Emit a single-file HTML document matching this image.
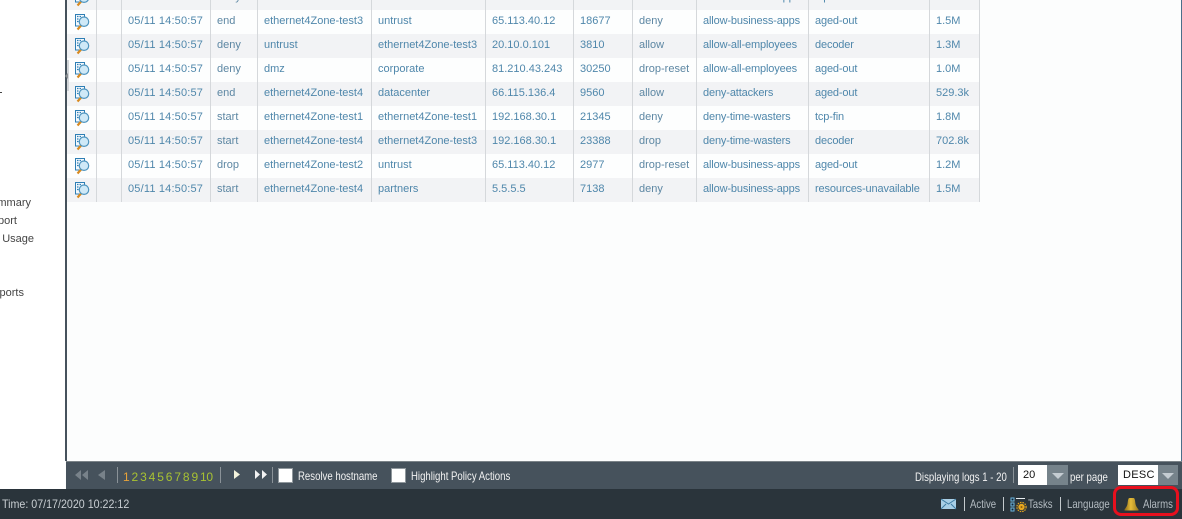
<!DOCTYPE html>
<html><head><meta charset="utf-8">
<style>
html,body{margin:0;padding:0}
body{width:1182px;height:519px;overflow:hidden;position:relative;background:#fcfdfd;font-family:"Liberation Sans",sans-serif;font-size:11px}
.a{position:absolute;white-space:nowrap}
#side{left:0;top:0;width:65px;height:489px;background:#fff;overflow:hidden;color:#444}
#main{left:65px;top:0;height:461px;background:#fcfdfd;border-left:2px solid #46525c;box-sizing:content-box;overflow:hidden;width:1115px}
#rb{left:1181px;top:0;width:1px;height:461px;background:#4a6f8a}
table{position:absolute;left:0;top:-14px;border-collapse:separate;border-spacing:0;table-layout:fixed;width:913px}
td{height:24px;padding:0 0 2px 6px;box-sizing:border-box;border-right:1px solid #d5d8db;color:#4f87ab;white-space:nowrap;overflow:hidden;font-size:11px;line-height:22px}
tr:nth-child(odd) td{background:#f2f3f5}
tr:nth-child(even) td{background:#fdfefe}
td.g{color:#5d87a3}
td:first-child{padding:0}
td:nth-child(3){letter-spacing:.18px}
td:nth-child(10),td:nth-child(11){letter-spacing:-.14px}
svg.i{display:block;margin:0 0 0 6px}
#bar{top:461px;height:28px;background:#46525c;border-top:1px solid #7b8388;box-sizing:border-box;left:66px;width:1116px}
#st{left:0;top:489px;width:1182px;height:30px;background:#2a343b}
.w{color:#f2f2f2;font-size:12px;line-height:14px;transform:scaleX(.8);transform-origin:0 0}
.sep{position:absolute;width:1px;background:#8a9298}
.cb{position:absolute;width:13px;height:13px;background:#fff;border:1px solid #8f979c;top:468px}
.s{color:#b4bcc2;font-size:12px;line-height:14px;transform:scaleX(.8);transform-origin:0 0}
</style></head><body>
<svg width="0" height="0" style="position:absolute"><defs>
<g id="ic">
<rect x="2.500" y="1.500" width="9" height="11.500" fill="#f4f9fd" stroke="#2f7fb5"/>
<path d="M4 3.500h1.500M6.500 3.500h1.500M4 6h1.500M4 8.500h1.500M6.500 8.500h1.500" stroke="#2f7fb5" stroke-width="1.300" fill="none"/>
<path d="M4.500 16.500L9 11.500" stroke="#d98a1f" stroke-width="2.200" fill="none"/>
<circle cx="11" cy="8.700" r="4.700" fill="#cfe9f7" stroke="#4f95bf" stroke-width="1.200"/>
</g></defs></svg>

<div class="a" id="side">
<span class="a" style="right:34px;top:197px;line-height:13px">Summary</span>
<span class="a" style="right:48px;top:215px;line-height:13px">Report</span>
<span class="a" style="right:31px;top:233px;line-height:13px">Bin Usage</span>
<span class="a" style="right:41px;top:287px;line-height:13px">Reports</span>
<div class="a" style="left:0;top:92px;width:2px;height:1px;background:#444"></div>
</div>

<div class="a" id="main">
<table>
<colgroup><col style="width:30px"><col style="width:25px"><col style="width:89px"><col style="width:47px"><col style="width:114px"><col style="width:114px"><col style="width:88px"><col style="width:59px"><col style="width:64px"><col style="width:112px"><col style="width:121px"><col style="width:50px"></colgroup>
<tr><td><svg class="i" width="18" height="18"><use href="#ic"/></svg></td><td></td><td>05/11 14:50:57</td><td class="g">deny</td><td>ethernet4Zone-test1</td><td>untrust</td><td>192.168.30.1</td><td>21345</td><td class="g">allow</td><td>allow-business-apps</td><td>tcp-fin</td><td>1.1M</td></tr>
<tr><td><svg class="i" width="18" height="18"><use href="#ic"/></svg></td><td></td><td>05/11 14:50:57</td><td class="g">end</td><td>ethernet4Zone-test3</td><td>untrust</td><td>65.113.40.12</td><td>18677</td><td class="g">deny</td><td>allow-business-apps</td><td>aged-out</td><td>1.5M</td></tr>
<tr><td><svg class="i" width="18" height="18"><use href="#ic"/></svg></td><td></td><td>05/11 14:50:57</td><td class="g">deny</td><td>untrust</td><td>ethernet4Zone-test3</td><td>20.10.0.101</td><td>3810</td><td class="g">allow</td><td>allow-all-employees</td><td>decoder</td><td>1.3M</td></tr>
<tr><td><svg class="i" width="18" height="18"><use href="#ic"/></svg></td><td></td><td>05/11 14:50:57</td><td class="g">deny</td><td>dmz</td><td>corporate</td><td>81.210.43.243</td><td>30250</td><td class="g">drop-reset</td><td>allow-all-employees</td><td>aged-out</td><td>1.0M</td></tr>
<tr><td><svg class="i" width="18" height="18"><use href="#ic"/></svg></td><td></td><td>05/11 14:50:57</td><td class="g">end</td><td>ethernet4Zone-test4</td><td>datacenter</td><td>66.115.136.4</td><td>9560</td><td class="g">allow</td><td>deny-attackers</td><td>aged-out</td><td>529.3k</td></tr>
<tr><td><svg class="i" width="18" height="18"><use href="#ic"/></svg></td><td></td><td>05/11 14:50:57</td><td class="g">start</td><td>ethernet4Zone-test1</td><td>ethernet4Zone-test1</td><td>192.168.30.1</td><td>21345</td><td class="g">deny</td><td>deny-time-wasters</td><td>tcp-fin</td><td>1.8M</td></tr>
<tr><td><svg class="i" width="18" height="18"><use href="#ic"/></svg></td><td></td><td>05/11 14:50:57</td><td class="g">start</td><td>ethernet4Zone-test4</td><td>ethernet4Zone-test3</td><td>192.168.30.1</td><td>23388</td><td class="g">drop</td><td>deny-time-wasters</td><td>decoder</td><td>702.8k</td></tr>
<tr><td><svg class="i" width="18" height="18"><use href="#ic"/></svg></td><td></td><td>05/11 14:50:57</td><td class="g">drop</td><td>ethernet4Zone-test2</td><td>untrust</td><td>65.113.40.12</td><td>2977</td><td class="g">drop-reset</td><td>allow-business-apps</td><td>aged-out</td><td>1.2M</td></tr>
<tr><td><svg class="i" width="18" height="18"><use href="#ic"/></svg></td><td></td><td>05/11 14:50:57</td><td class="g">start</td><td>ethernet4Zone-test4</td><td>partners</td><td>5.5.5.5</td><td>7138</td><td class="g">deny</td><td>allow-business-apps</td><td>resources-unavailable</td><td>1.5M</td></tr>
</table>
<div class="a" style="left:0;top:60px;width:2px;height:31px;background:#d2d5d8"></div>
</div>
<div class="a" style="left:65px;top:73px;width:0;height:0;border:3px solid transparent;border-right-color:#8b8f92;border-left:0"></div>
<div class="a" id="rb"></div>

<div class="a" id="bar"></div>
<svg class="a" style="left:73px;top:469px" width="150" height="14">
<path d="M8 1v10L2 6zM15 1v10L9 6z" fill="#78828a"/>
<path d="M32 1v10l-7-5z" fill="#78828a"/>
</svg>
<div class="sep" style="left:117px;top:467px;height:16px"></div>
<div class="a" style="left:123px;top:470px;font-size:12px;line-height:14px;color:#a8c232;letter-spacing:-.3px;word-spacing:-.85px"><span style="color:#e8a33a">1</span> 2 3 4 5 6 7 8 9 10</div>
<div class="sep" style="left:220px;top:467px;height:16px"></div>
<svg class="a" style="left:232px;top:469px" width="36" height="12">
<path d="M2 1v9l6-4.500z" fill="#f3f3dc"/>
<path d="M23 1v9l5-4.500zM30 1v9l5-4.500z" fill="#f3f3f3"/>
</svg>
<div class="sep" style="left:272px;top:467px;height:16px"></div>
<div class="cb" style="left:278px"></div>
<div class="a w" style="left:298px;top:469px">Resolve hostname</div>
<div class="cb" style="left:391px"></div>
<div class="a w" style="left:411px;top:469px">Highlight Policy Actions</div>
<div class="a w" style="left:915px;top:470px">Displaying logs 1 - 20</div>
<div class="sep" style="left:1013px;top:467px;height:16px"></div>
<div class="a" style="left:1018px;top:465px;width:29px;height:20px;background:#fff;color:#111;font-size:11px;line-height:20px;padding-left:5px;box-sizing:border-box">20</div>
<div class="a" style="left:1047px;top:465px;width:21px;height:20px;background:#76838b"></div>
<div class="a" style="left:1052px;top:473px;border:6px solid transparent;border-top:6px solid #c4ccd2;border-bottom:0"></div>
<div class="a w" style="left:1070px;top:470px">per page</div>
<div class="a" style="left:1118px;top:465px;width:40px;height:20px;background:#fff;color:#111;font-size:11px;line-height:20px;padding-left:5px;box-sizing:border-box;letter-spacing:.3px">DESC</div>
<div class="a" style="left:1158px;top:465px;width:20px;height:20px;background:#76838b"></div>
<div class="a" style="left:1162px;top:473px;border:6px solid transparent;border-top:6px solid #c4ccd2;border-bottom:0"></div>

<div class="a" id="st"></div>
<div class="a" style="left:2px;top:497px;color:#c8ced2;font-size:12px;line-height:14px;transform:scaleX(.89);transform-origin:0 0">Time: 07/17/2020 10:22:12</div>
<svg class="a" style="left:941px;top:498px" width="16" height="12">
<rect x="0" y="1" width="15" height="10" fill="#a9cfe6"/>
<path d="M0 1l7.500 5 7.500-5M0 11l5-5M15 11l-5-5" stroke="#3f7da3" fill="none"/>
</svg>
<div class="sep" style="left:964px;top:497px;height:14px;background:#c4cacd"></div>
<div class="a s" style="left:970px;top:497px">Active</div>
<div class="sep" style="left:1003px;top:497px;height:14px;background:#c4cacd"></div>
<svg class="a" style="left:1010px;top:497px" width="17" height="16">
<path d="M1 1h3v3H1zM1 6h3v3H1zM1 11h3v3H1z" fill="#123" stroke="#6fb8e0"/>
<path d="M6 1.500h9" stroke="#e8edf0"/>
<circle cx="11.500" cy="10" r="4.600" fill="none" stroke="#e8a81e" stroke-width="1.200" stroke-dasharray="1.500 1"/>
<circle cx="11.500" cy="10" r="3.200" fill="#e8a81e"/>
<circle cx="11.500" cy="10" r="1" fill="#8a5c10"/>
</svg>
<div class="a s" style="left:1028px;top:497px">Tasks</div>
<div class="sep" style="left:1060px;top:497px;height:14px;background:#c4cacd"></div>
<div class="a s" style="left:1067px;top:497px">Language</div>
<div class="a" style="left:1113px;top:486px;width:60px;height:24px;border:3px solid #e8101e;border-radius:8px"></div>
<svg class="a" style="left:1124px;top:498px" width="16" height="13">
<defs><linearGradient id="b" x1="0" x2="1" y1="0" y2="0"><stop offset="0" stop-color="#8a6a16"/><stop offset=".45" stop-color="#e6bc3a"/><stop offset="1" stop-color="#9a7a1c"/></linearGradient></defs>
<path d="M5.500 0h4c1.500 0 1.500 3 2 6 .3 2 1.500 3.500 3 5.500v1H.500v-1c1.500-2 2.700-3.500 3-5.500 .5-3 .5-6 2-6z" fill="url(#b)"/>
</svg>
<div class="a s" style="left:1143px;top:497px">Alarms</div>
</body></html>
